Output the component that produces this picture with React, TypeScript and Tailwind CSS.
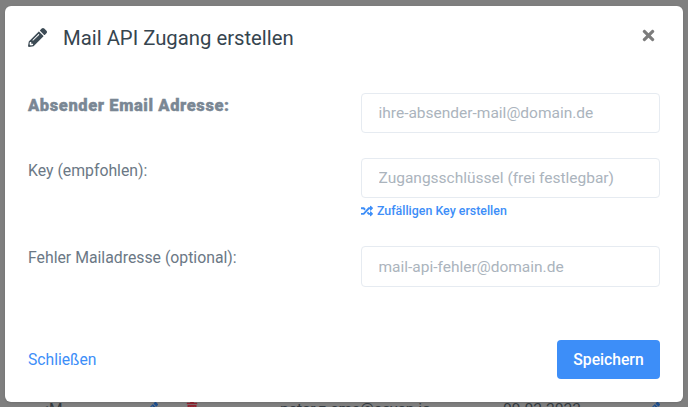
import { FaPencilAlt, FaTimes, FaRandom, FaTrashAlt } from "react-icons/fa"

const inputClass =
  "h-10 w-[299px] rounded border border-[#e6ebf1] bg-white px-[16.5px] text-[15.5px] text-[#9aa5b1] outline-none placeholder:text-[#abb4bd]"

export default function App() {
  return (
    <div className="relative h-[407px] w-[688px] overflow-hidden bg-[#7f7f7f] font-['Roboto',sans-serif]">
      {/* table behind the overlay, only its top edge shows */}
      <div className="absolute left-0 top-[398px] flex h-5 w-full items-start text-[15.5px] text-[#333a40]">
        <span className="ml-[41px] w-[105px]">&lt;M</span>
        <FaPencilAlt className="mt-[4px] h-3 w-3 text-[#1d4f8f]" />
        <FaTrashAlt className="ml-[28px] mt-[4px] h-3 w-3 text-[#8f2430]" />
        <span className="ml-[82px] w-[223px]">peter.z.sms@seven.io</span>
        <span className="w-[145px]">09.02.2023</span>
        <FaPencilAlt className="mt-[4px] h-3 w-3 text-[#1d4f8f]" />
      </div>

      <div className="relative ml-[5px] mt-[6px] flex h-[396px] w-[678px] flex-col rounded-md bg-white pl-[23px] pr-[23px] shadow-sm">
        <div className="flex h-[63px] items-center justify-between pt-[1px]">
          <div className="flex items-center">
            <FaPencilAlt className="h-[19px] w-[19px] text-[#3d4b55]" />
            <h1 className="ml-[16px] text-[20.3px] font-normal leading-none text-[#36454f]">Mail API Zugang erstellen</h1>
          </div>
          <FaTimes className="mr-[3px] mt-[-6px] h-[17px] w-[17px] text-[#7c7c7c]" />
        </div>

        <div className="mt-6 flex items-start justify-between">
          <label className="mt-[3px] text-[16.5px] font-black leading-5 tracking-[0.6px] text-[#7a8794] [-webkit-text-stroke:0.4px_#7a8794]">Absender Email Adresse:</label>
          <input className={inputClass} placeholder="ihre-absender-mail@domain.de" readOnly />
        </div>

        <div className="mt-[25px] flex items-start justify-between">
          <label className="mt-[3px] text-[15.8px] leading-5 text-[#6b7885]">Key (empfohlen):</label>
          <div className="w-[299px]">
            <input className={inputClass} placeholder="Zugangsschlüssel (frei festlegbar)" readOnly />
            <a className="mt-[5px] flex items-center text-[12.4px] font-medium leading-4 text-[#3d8ef8]">
              <FaRandom className="mr-[4px] h-3 w-3" />
              Zufälligen Key erstellen
            </a>
          </div>
        </div>

        <div className="mt-[27px] flex items-start justify-between">
          <label className="mt-[2px] text-[15.8px] leading-5 text-[#6b7885]">Fehler Mailadresse (optional):</label>
          <input className={`${inputClass} h-[41px]`} placeholder="mail-api-fehler@domain.de" readOnly />
        </div>

        <div className="mt-[53px] flex items-center justify-between">
          <a className="text-[15.7px] text-[#3d8ef8]">Schließen</a>
          <button className="h-[39px] w-[103px] rounded bg-[#3d8ef8] text-[15.7px] font-medium text-white">Speichern</button>
        </div>
      </div>
    </div>
  )
}
